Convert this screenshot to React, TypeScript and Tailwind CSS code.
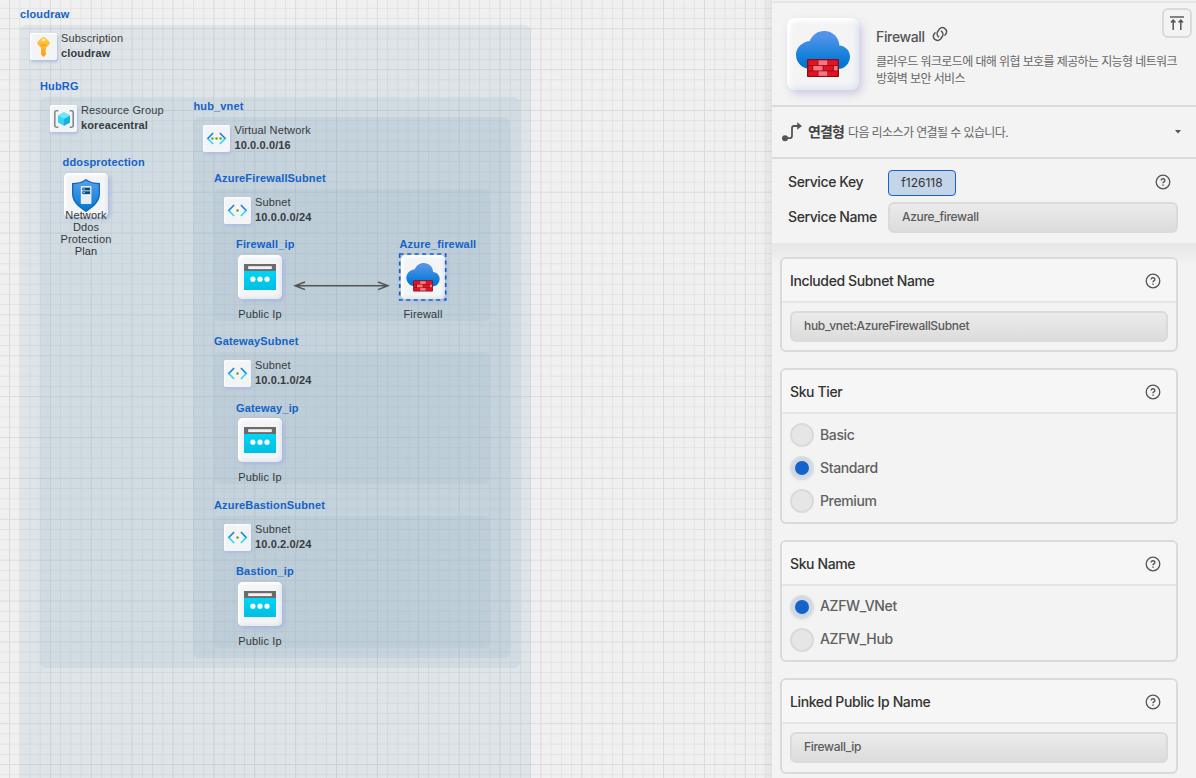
import React from "react";

type Kind = "key" | "group" | "vnet" | "subnet" | "shield" | "ip" | "firewall";

function CloudWall({ id }: { id: string }) {
  return (
    <svg viewBox="0 0 54 47" className="h-full w-full">
      <defs>
        <linearGradient id={id} x1="0" y1="0" x2="0" y2="1">
          <stop offset="0.15" stopColor="#5093e8" />
          <stop offset="0.85" stopColor="#0078d6" />
        </linearGradient>
      </defs>
      <path d="M54 25.5C54 19.6 49.4 14.8 43.4 14.4C43 6.2 36.5 0 28.2 0C21.7 0 16 4 13.8 10C6 10.9 0 16.7 0 24C0 31.8 6.6 38 15 38H42.4C48.8 38 54 32.4 54 25.5Z" fill={`url(#${id})`} />
      <rect x="11" y="28" width="32" height="18" rx="0.8" fill="#821010" />
      <g fill="#e81123">
        <rect x="12.3" y="29.3" width="9.4" height="4.8" />
        <rect x="32" y="29.3" width="9.7" height="4.8" />
        <rect x="12.3" y="34.9" width="4" height="4.6" />
        <rect x="27.4" y="34.9" width="9.4" height="4.6" />
        <rect x="12.3" y="40.3" width="9.4" height="4.6" />
        <rect x="32" y="40.3" width="9.7" height="4.6" />
      </g>
      <g fill="#ff7381">
        <rect x="22.4" y="29.3" width="9" height="4.8" />
        <rect x="17.2" y="34.9" width="9.4" height="4.6" />
        <rect x="37.8" y="34.9" width="3.9" height="4.6" />
        <rect x="22.4" y="40.3" width="9" height="4.6" />
      </g>
    </svg>
  );
}

function Glyph({ kind, id }: { kind: Kind; id: string }) {
  if (kind === "firewall") return <CloudWall id={id} />;
  if (kind === "ip")
    return (
      <svg viewBox="0 0 32 26" className="h-full w-full">
        <defs>
          <linearGradient id={id} x1="0" y1="0" x2="0" y2="1">
            <stop offset="0" stopColor="#00d4f5" />
            <stop offset="1" stopColor="#00bfe2" />
          </linearGradient>
        </defs>
        <rect width="32" height="7" fill="#6b6b6b" />
        <rect x="4.2" y="2.2" width="23.6" height="2.9" fill="#f2f2f2" />
        <rect y="7" width="32" height="19" fill={`url(#${id})`} />
        <circle cx="8.9" cy="15.2" r="2.6" fill="#fff" />
        <circle cx="16" cy="15.2" r="2.6" fill="#fff" />
        <circle cx="23" cy="15.2" r="2.6" fill="#fff" />
      </svg>
    );
  if (kind === "key")
    return (
      <svg viewBox="0 0 13 20" className="h-full w-full">
        <defs>
          <linearGradient id={id} x1="0" y1="0" x2="0" y2="1">
            <stop offset="0" stopColor="#ffce45" />
            <stop offset="1" stopColor="#ff9b1a" />
          </linearGradient>
        </defs>
        <path fillRule="evenodd" fill={`url(#${id})`} d="M4.9.5Q6.5-.3 8.1.5L12 4.2Q13.2 5.8 12.3 7.6L9 10.8V12.2L8.6 13.2L9 14.2L8.6 15.5L9 16.5V17.5L6.5 20L4 17.5V10.8L.7 7.6Q-.2 5.8 1 4.2ZM6.5 1.6A1.3 1.3 0 1 0 6.5 4.2A1.3 1.3 0 1 0 6.5 1.6Z" />
        <path d="M3.8 8H9.2" stroke="#f08a1c" strokeWidth="0.7" />
      </svg>
    );
  if (kind === "shield")
    return (
      <svg viewBox="0 0 28 33" className="h-full w-full">
        <defs>
          <linearGradient id={id} x1="0" y1="0" x2="0" y2="1">
            <stop offset="0" stopColor="#57a0ec" />
            <stop offset="1" stopColor="#0078d4" />
          </linearGradient>
        </defs>
        <path d="M14 0C18.6 3 22.5 4 28 4V15C28 24 19 29.8 14 33C9 29.8 0 24 0 15V4C5.5 4 9.4 3 14 0Z" fill="#1267b8" />
        <path d="M14 1.6C18.4 4.2 22 5.2 26.6 5.3V15C26.6 23 18.6 28.4 14 31.3C9.4 28.4 1.4 23 1.4 15V5.3C6 5.2 9.6 4.2 14 1.6Z" fill={`url(#${id})`} />
        <rect x="8.8" y="7" width="10.6" height="18" rx="0.8" fill="#e8ebef" />
        <rect x="10.3" y="8.6" width="7.8" height="2.8" fill="#0b4a80" />
        <rect x="10.3" y="12.3" width="7.8" height="2.8" fill="#0b4a80" />
        <path d="M11 10h2M11 13.7h2" stroke="#50e6ff" strokeWidth="1" />
      </svg>
    );
  if (kind === "group")
    return (
      <svg viewBox="0 0 20 18" className="h-full w-full">
        <path d="M4.4.8H2.4Q.8.8.8 2.4V15.6Q.8 17.2 2.4 17.2H4.4M15.6.8H17.6Q19.2.8 19.2 2.4V15.6Q19.2 17.2 17.6 17.2H15.6" fill="none" stroke="#85898c" strokeWidth="1.6" />
        <path d="M10 2.2L16 5.5V12.4L10 15.8L4 12.4V5.5Z" fill="#32d4f5" />
        <path d="M10 9V15.8L16 12.4V5.5Z" fill="#18b1dc" />
        <path d="M10 2.2L16 5.5L10 9L4 5.5Z" fill="#72e6fb" />
      </svg>
    );
  return (
    <svg viewBox="0 0 20 13" className="h-full w-full">
      <defs>
        <linearGradient id={id} gradientUnits="userSpaceOnUse" x1="0" y1="0" x2="0" y2="13">
          <stop offset="0.42" stopColor="#1b84d4" />
          <stop offset="0.6" stopColor="#32d5f5" />
        </linearGradient>
      </defs>
      <path d="M6.6 1L1.3 6.5L6.6 12M13.4 1L18.7 6.5L13.4 12" fill="none" stroke={`url(#${id})`} strokeWidth="1.7" />
      <circle cx="10" cy="6.5" r="1.25" fill="#62a420" />
      {kind === "vnet" && (
        <g fill="#62a420">
          <circle cx="5.9" cy="6.5" r="1.25" />
          <circle cx="14.1" cy="6.5" r="1.25" />
        </g>
      )}
    </svg>
  );
}

const glyphSize: Record<Kind, string> = {
  key: "h-[20px] w-[13px]",
  group: "h-[18px] w-[20px]",
  vnet: "h-[13px] w-[21px]",
  subnet: "h-[13px] w-[21px]",
  shield: "h-[33px] w-[28px]",
  ip: "h-[26px] w-[32px]",
  firewall: "h-[29px] w-[34px]",
};

const boxFill: Record<Kind, string> = {
  key: "bg-[#5082a8]/10",
  group: "bg-[#89b0c1]/15",
  vnet: "bg-[#83a1bb]/15",
  subnet: "bg-[#92b3c9]/15",
  shield: "",
  ip: "",
  firewall: "",
};

interface BoxProps { name: string; x: number; y: number; w: number; h: number; kind: Kind; title: string; detail: string }

const boxes: BoxProps[] = [
  { name: "cloudraw", x: 20, y: 25, w: 511, h: 800, kind: "key", title: "Subscription", detail: "cloudraw" },
  { name: "HubRG", x: 40, y: 97, w: 480, h: 571, kind: "group", title: "Resource Group", detail: "koreacentral" },
  { name: "hub_vnet", x: 193.4, y: 117, w: 317, h: 541, kind: "vnet", title: "Virtual Network", detail: "10.0.0.0/16" },
  { name: "AzureFirewallSubnet", x: 214, y: 189, w: 276, h: 132, kind: "subnet", title: "Subnet", detail: "10.0.0.0/24" },
  { name: "GatewaySubnet", x: 214, y: 352, w: 276, h: 132, kind: "subnet", title: "Subnet", detail: "10.0.1.0/24" },
  { name: "AzureBastionSubnet", x: 214, y: 516, w: 276, h: 132, kind: "subnet", title: "Subnet", detail: "10.0.2.0/24" },
];

function Group({ box }: { box: BoxProps }) {
  return (
    <div className={"absolute rounded-[6px] " + boxFill[box.kind]} style={{ left: box.x, top: box.y, width: box.w, height: box.h }}>
      <div className="absolute -top-[17px] left-0 whitespace-nowrap text-[11px] leading-[13px] font-bold tracking-[0.16px] text-[#1462c8]">{box.name}</div>
      <div className="flex gap-[4px] pt-[8px] pl-[10px]">
        <div className="flex size-[27px] shrink-0 items-center justify-center rounded-[2px] bg-[#f3f4f6] shadow-[1px_2px_3px_#b2bbde,inset_1px_1px_2px_white]">
          <div className={glyphSize[box.kind]}><Glyph kind={box.kind} id={"g-" + box.name} /></div>
        </div>
        <div className="-mt-[2px] text-[11px] leading-[15px] whitespace-nowrap text-[#383b3e]">
          <div className="tracking-[0.14px]">{box.title}</div>
          <div className="font-bold tracking-[0.13px]">{box.detail}</div>
        </div>
      </div>
    </div>
  );
}

interface NodeProps { name: string; x: number; y: number; kind: Kind; label: string; selected?: boolean }

const nodes: NodeProps[] = [
  { name: "Firewall_ip", x: 238, y: 255, kind: "ip", label: "Public Ip" },
  { name: "Azure_firewall", x: 401, y: 255, kind: "firewall", label: "Firewall", selected: true },
  { name: "Gateway_ip", x: 238, y: 418, kind: "ip", label: "Public Ip" },
  { name: "Bastion_ip", x: 238, y: 582, kind: "ip", label: "Public Ip" },
];

function Tile({ kind, id }: { kind: Kind; id: string }) {
  return (
    <div className="flex size-[44px] items-center justify-center rounded-[5px] bg-[#f3f4f6] shadow-[2px_2px_4px_#a9b6dc,inset_2px_2px_3px_white,inset_-2px_-2px_3px_#e2e9f0]">
      <div className={glyphSize[kind]}><Glyph kind={kind} id={id} /></div>
    </div>
  );
}

function Node({ node }: { node: NodeProps }) {
  return (
    <div className="absolute size-[44px]" style={{ left: node.x, top: node.y }}>
      <div className={"absolute whitespace-nowrap text-[11px] leading-[13px] font-bold tracking-[0.16px] text-[#1462c8] " + (node.selected ? "-top-[17px] -left-[1.5px]" : node.name === "Gateway_ip" ? "-top-[16px] -left-[2px]" : "-top-[17px] -left-[2px]")}>{node.name}</div>
      <Tile kind={node.kind} id={"n-" + node.name} />
      {node.selected && (
        <svg className="absolute -top-[2px] -left-[3px]" width="50" height="48">
          <rect x="1.7" y="1" width="46" height="46" fill="none" stroke="#1462c8" strokeWidth="1.7" strokeDasharray="4 3.5" />
        </svg>
      )}
      <div className="absolute top-[53px] -left-[20px] w-[84px] text-center text-[11px] leading-[13px] tracking-[0.16px] text-[#33373a]">{node.label}</div>
    </div>
  );
}

function GridLines() {
  return (
    <svg className="absolute inset-0 h-full w-full">
      <defs>
        <pattern id="fine" width="10.22" height="10.22" patternUnits="userSpaceOnUse" x="9" y="7.8">
          <path d="M0 .5H10.22M.5 0V10.22" stroke="#aaa" strokeOpacity="0.19" strokeWidth="1" />
        </pattern>
        <pattern id="coarse" width="40.88" height="40.88" patternUnits="userSpaceOnUse" x="9" y="28.2">
          <path d="M0 .5H40.88M.5 0V40.88" stroke="#aaa" strokeOpacity="0.15" strokeWidth="1" />
        </pattern>
      </defs>
      <rect width="100%" height="100%" fill="url(#fine)" />
      <rect width="100%" height="100%" fill="url(#coarse)" />
    </svg>
  );
}

function Diagram() {
  return (
    <main className="relative w-[772px] shrink-0 overflow-hidden bg-[#f0f0f0] font-['Liberation_Sans',sans-serif]">
      <GridLines />
      {boxes.map((b) => <Group key={b.name} box={b} />)}
      <div className="absolute top-[173px] left-[64px] size-[44px]">
        <div className="absolute -top-[17px] -left-[1.5px] text-[11px] leading-[13px] font-bold tracking-[0.16px] text-[#1462c8]">ddosprotection</div>
        <Tile kind="shield" id="ddos" />
        <div className="absolute top-[36px] -left-[8px] w-[60px] text-center text-[11px] leading-[12px] tracking-[0.13px] text-[#33373a]">Network Ddos Protection Plan</div>
      </div>
      <svg className="absolute top-[280px] left-[293px]" width="97" height="12">
        <path d="M2 5.8H95M12 2L2 5.8L12 9.6M85 2L95 5.8L85 9.6" fill="none" stroke="#555" strokeWidth="1.5" />
      </svg>
      {nodes.map((n) => <Node key={n.name} node={n} />)}
      <div className="absolute top-0 right-0 h-full w-[10px] bg-linear-to-r from-black/0 to-black/6" />
    </main>
  );
}

function Help() {
  return (
    <svg width="16" height="16" viewBox="0 0 16 16" fill="none" stroke="#555" strokeWidth="1.3">
      <circle cx="8" cy="8" r="6.8" />
      <path d="M6.1 6.4A1.9 1.7 0 1 1 8.7 8Q8 8.3 8 9.3" strokeWidth="1.4" />
      <path d="M8 10.4V11.8" strokeWidth="1.5" />
    </svg>
  );
}

function Field({ value }: { value: string }) {
  return <div className="h-[31px] w-full rounded-[6px] border-2 border-[#dadada] bg-linear-to-b from-[#ebebeb] to-[#dcdcdc] pl-[12px] text-[12px] leading-[25px] font-medium tracking-[-0.32px] text-[#5a5a5a]">{value}</div>;
}

function Card({ title, className, children }: { title: string; className: string; children: React.ReactNode }) {
  return (
    <section className={"flex shrink-0 flex-col rounded-[6px] border-2 border-[#dadada] bg-[#f3f3f3] " + className}>
      <header className="flex h-[44px] shrink-0 items-center justify-between rounded-t-[4px] border-b-2 border-[#e5e5e5] bg-[#f6f6f6] pt-px pr-[15px] pl-[8px]">
        <h3 className="text-[14px] leading-[20px] font-medium tracking-[-0.38px] text-[#333]">{title}</h3>
        <Help />
      </header>
      <div className="px-[8px] pt-[8px]">{children}</div>
    </section>
  );
}

function Radios({ options, value, labelClass = "-mt-px" }: { options: string[]; value: string; labelClass?: string }) {
  return (
    <div className="flex flex-col gap-[9px] pt-px">
      {options.map((o) => (
        <div key={o} className="flex h-[24px] items-center gap-[6px]">
          {o === value ? (
            <span className="flex size-[24px] items-center justify-center rounded-full border-2 border-[#d9dce0] bg-[#d1d8e2] shadow-[0_1px_3px_#dfe6f2]"><span className="size-[14px] rounded-full bg-[#1462cb]" /></span>
          ) : (
            <span className="size-[24px] rounded-full border-2 border-[#dadada] bg-[#e6e6e6]" />
          )}
          <span className={"text-[14px] leading-[20px] font-medium tracking-[-0.36px] text-[#606060] " + labelClass}>{o}</span>
        </div>
      ))}
    </div>
  );
}

function Panel() {
  return (
    <aside className="flex h-full min-w-0 flex-1 flex-col overflow-hidden bg-[#f3f3f3] pt-px font-['Inter','Noto_Sans_CJK_KR',sans-serif]">
      <header className="flex h-[106px] shrink-0 border-t-2 border-b-2 border-t-[#e5e5e5] border-b-[#dadada] pl-[15px]">
        <div className="mt-[15px] flex size-[72px] shrink-0 items-center justify-center rounded-[8px] bg-[#f4f4f5] shadow-[3px_4px_8px_#cdc9e4,inset_3px_3px_4px_white,inset_-3px_-3px_5px_#dce9ef]">
          <div className="h-[47px] w-[54px]"><CloudWall id="hero" /></div>
        </div>
        <div className="ml-[17px] w-[286px] shrink-0 pt-[21px]">
          <div className="flex h-[24px] items-center gap-[7px] text-[14px] font-medium tracking-[-0.35px] text-[#555]">
            <span>Firewall</span>
            <svg className="-mt-[4px]" width="16" height="16" viewBox="0 0 16 16" fill="none" stroke="#555" strokeWidth="1.5" strokeLinecap="round">
              <path d="M6.6 10.8A4.1 4.1 0 0 1 5.9 5.2L7.4 3A4.1 4.1 0 0 1 14.2 7.4L13 9.2" />
              <path d="M9.4 5.2A4.1 4.1 0 0 1 10.1 10.8L8.6 13A4.1 4.1 0 0 1 1.8 8.6L3 6.8" />
            </svg>
          </div>
          <p className="pt-[5px] text-[12px] leading-[17px] tracking-[-0.61px] whitespace-nowrap text-[#666]">클라우드 워크로드에 대해 위협 보호를 제공하는 지능형 네트워크<br />방화벽 보안 서비스</p>
        </div>
        <div className="mt-[5px] flex size-[30px] shrink-0 items-center justify-center rounded-[6px] border-2 border-[#dadada]">
          <svg width="16" height="16" viewBox="0 0 16 16" fill="none" stroke="#555" strokeWidth="1.5">
            <path d="M1 2H15" stroke="#777" strokeWidth="1.8" />
            <path d="M4.2 15V5M2 7.4L4.2 5L6.4 7.4M11.8 15V5M9.6 7.4L11.8 5L14 7.4" />
          </svg>
        </div>
      </header>
      <div className="flex h-[52px] shrink-0 items-center border-b-2 border-[#dadada] pl-[10px]">
        <svg width="20" height="20" viewBox="0 0 20 20" className="shrink-0">
          <circle cx="3" cy="16.2" r="3" fill="#555" />
          <path d="M3 16.2H7.5Q10 16.2 10 13.7V6Q10 4 12 4H16" fill="none" stroke="#555" strokeWidth="1.8" />
          <path d="M15.2.3L20 4L15.2 7.7Z" fill="#555" />
        </svg>
        <b className="ml-[6px] text-[14px] leading-[20px] font-bold tracking-[-0.9px] text-[#444]">연결형</b>
        <span className="mt-px ml-[4px] text-[12px] leading-[20px] tracking-[-0.6px] text-[#666]">다음 리소스가 연결될 수 있습니다.</span>
        <svg className="mr-[15px] ml-auto" width="6" height="4" viewBox="0 0 6 4"><path d="M0 0H6L3 3.5Z" fill="#555" /></svg>
      </div>
      <div className="flex h-[84px] shrink-0 flex-col gap-[6px] pt-[11px] pl-[16px]">
        <div className="flex h-[26px] items-center text-[14px] font-medium text-[#333]">
          <span className="-mt-[3px] w-[100px] tracking-[-0.4px]">Service Key</span>
          <span className="flex h-[26px] w-[68px] items-center justify-center rounded-[4px] border border-[#1462cb] bg-[#c4d4e9] text-[12px] font-normal text-[#333]">f126118</span>
          <span className="mt-[-2px] mr-[25px] ml-auto"><Help /></span>
        </div>
        <div className="flex h-[31px] items-center text-[14px] font-medium text-[#333]">
          <span className="-mt-[2px] w-[100px] shrink-0 tracking-[-0.4px]">Service Name</span>
          <div className="w-[290px]"><Field value="Azure_firewall" /></div>
        </div>
      </div>
      <div className="flex min-h-0 flex-1 flex-col gap-[16px] overflow-hidden bg-[linear-gradient(#e6e6e6,#f3f3f3_22px)] pt-[14px] pr-[18px] pl-[8px]">
        <Card title="Included Subnet Name" className="h-[95px]"><Field value="hub_vnet:AzureFirewallSubnet" /></Card>
        <Card title="Sku Tier" className="h-[156px]"><Radios options={["Basic", "Standard", "Premium"]} value="Standard" /></Card>
        <Card title="Sku Name" className="h-[122px]"><Radios options={["AZFW_VNet", "AZFW_Hub"]} value="AZFW_VNet" labelClass="-mt-[3px]" /></Card>
        <Card title="Linked Public Ip Name" className="h-[96px]"><Field value="Firewall_ip" /></Card>
      </div>
    </aside>
  );
}

export default function App() {
  return (
    <div className="flex h-[778px] w-[1196px] overflow-hidden">
      <Diagram />
      <Panel />
    </div>
  );
}
